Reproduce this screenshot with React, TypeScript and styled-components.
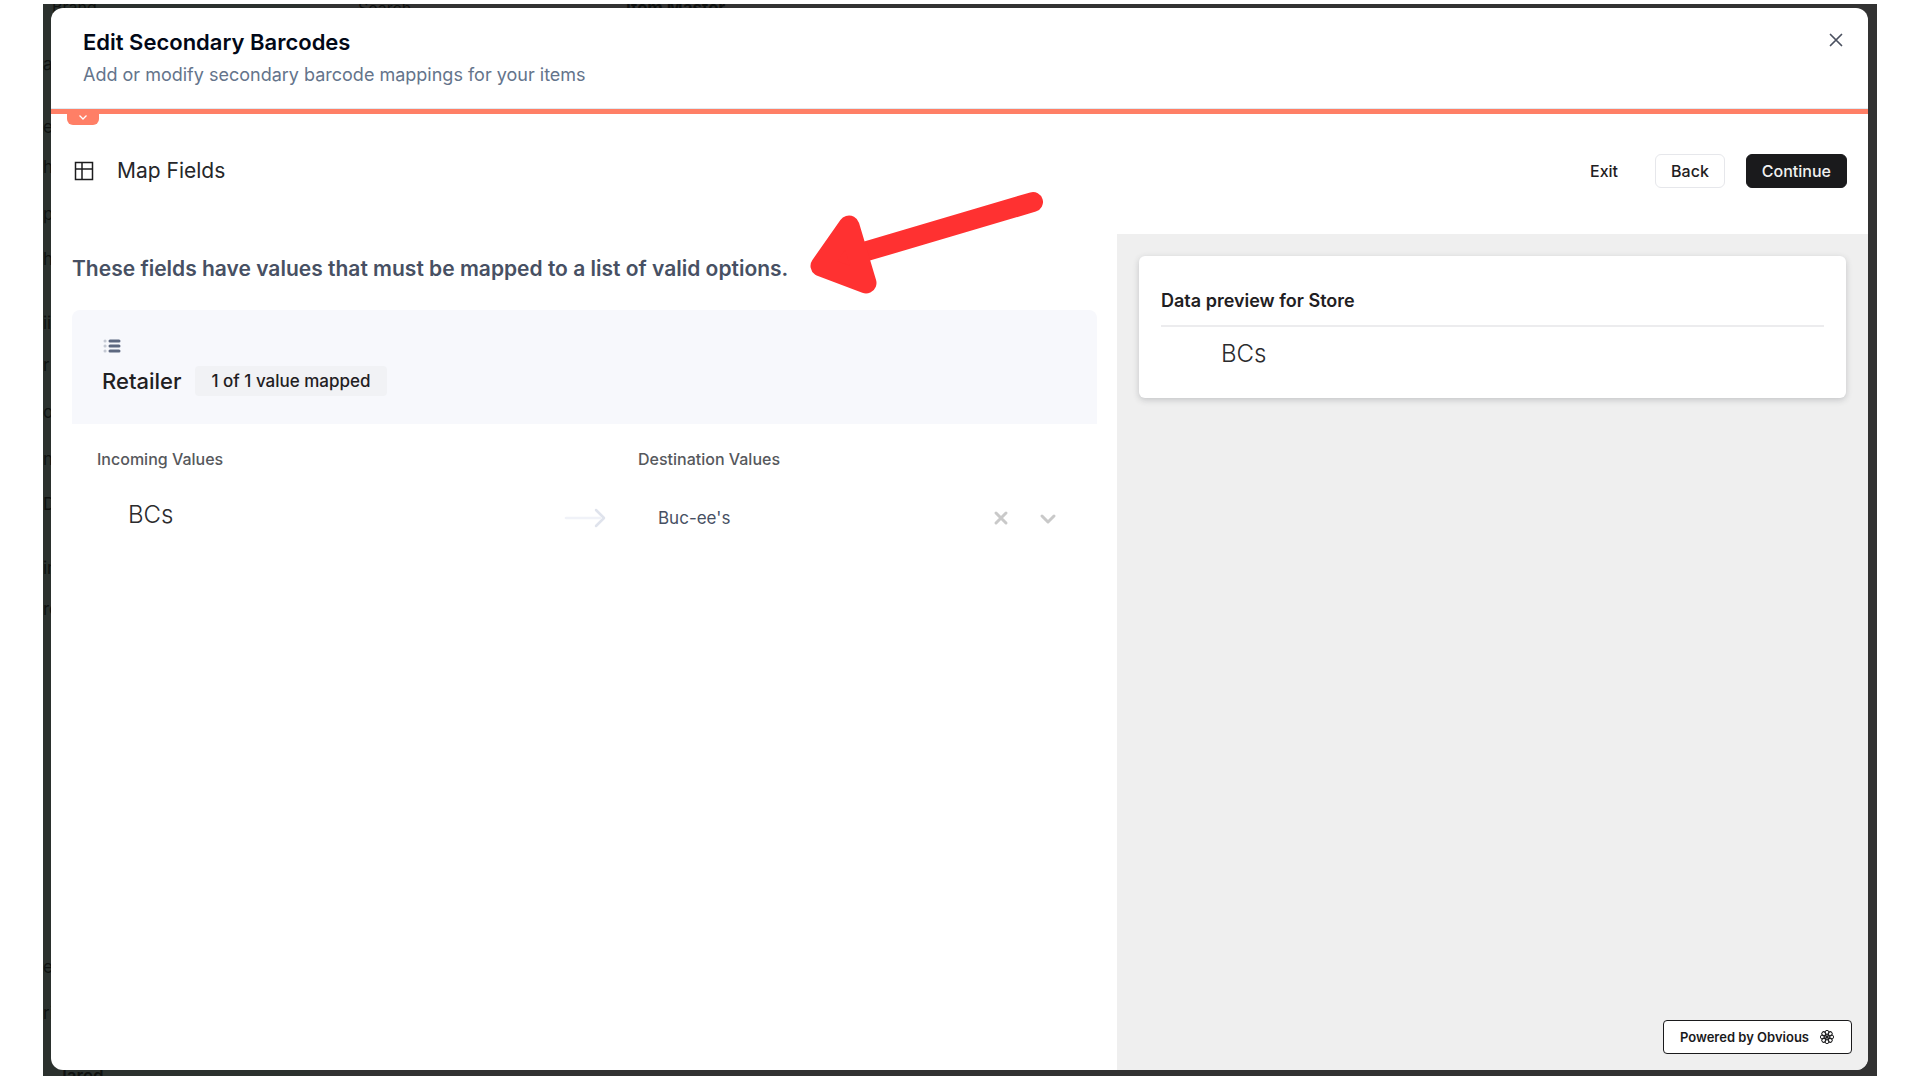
import React, { useState } from "react";
import styled, { createGlobalStyle } from "styled-components";

const GlobalStyle = createGlobalStyle`
  *, *::before, *::after { box-sizing: border-box; }
  body { margin: 0; background: #fff; }
  body, button, select { font-family: Inter, "Liberation Sans", sans-serif; }
  h1, h2, h3, p, ul { margin: 0; padding: 0; }
`;

const Page = styled.div`
  height: 100vh;
  padding: 4px 43px;
`;

const Screen = styled.div`
  position: relative;
  height: 100%;
  padding: 4px 9px 6px 8px;
  background: #323232;
  overflow: hidden;
`;

const Behind = styled.div`
  position: absolute;
  inset: 0;
  display: flex;
  color: #0f1110;
`;

const SideNav = styled.ul`
  width: 267px;
  flex: none;
  display: flex;
  flex-direction: column;
  background: #2b312e;
  list-style: none;
`;

const NavItem = styled.li<{ $height: number }>`
  flex: none;
  display: flex;
  align-items: flex-end;
  height: ${(p) => p.$height}px;
  font-size: 17px;
  line-height: 20px;
`;

const NavBrand = styled.li`
  flex: none;
  height: 12px;
  padding-left: 9px;
  font-size: 16px;
  line-height: 6px;
`;

const NavUser = styled.li`
  flex: none;
  margin-top: auto;
  height: 8px;
  padding-left: 14px;
  font-size: 17px;
  font-weight: 600;
  line-height: 16px;
`;

const TopBar = styled.div`
  display: flex;
  gap: 215px;
  padding-left: 48px;
  font-size: 16px;
  line-height: 8px;
`;

const Strong = styled.span`
  font-size: 17px;
  font-weight: 700;
`;

const Modal = styled.section`
  position: relative;
  display: flex;
  flex-direction: column;
  height: 100%;
  background: #fff;
  border-radius: 12px;
  overflow: hidden;
`;

const ModalHeader = styled.header`
  display: flex;
  justify-content: space-between;
  align-items: flex-start;
  height: 101px;
  padding: 18px 18px 0 32px;
  border-bottom: 1px solid #dfeaf2;
`;

const Title = styled.h1`
  font-size: 22px;
  font-weight: 600;
  line-height: 32px;
  color: #020817;
`;

const Subtitle = styled.p`
  font-size: 18px;
  line-height: 34px;
  color: #64748b;
`;

const IconButton = styled.button`
  display: flex;
  align-items: center;
  justify-content: center;
  flex: none;
  width: 28px;
  height: 28px;
  padding: 0;
  border: 0;
  background: none;
  color: #4b5160;
  cursor: pointer;
`;

const Accent = styled.div`
  flex: none;
  height: 16px;
  padding-left: 16px;
  border-top: 5px solid #ff7f66;
`;

const AccentTab = styled.button`
  display: flex;
  align-items: flex-start;
  justify-content: center;
  width: 32px;
  height: 11px;
  padding: 0;
  border: 0;
  border-radius: 0 0 6px 6px;
  background: #ff7f66;
  color: #fff;
`;

const Toolbar = styled.div`
  flex: none;
  display: flex;
  align-items: center;
  height: 109px;
  padding: 0 21px 18px 23px;
  color: #1c1c1e;
`;

const ToolbarTitle = styled.h2`
  margin-left: 23px;
  flex: 1;
  font-size: 21px;
  font-weight: 400;
  line-height: 28px;
  color: #26272a;
`;

const Actions = styled.div`
  display: flex;
  gap: 21px;
`;

const Button = styled.button<{ $kind: "plain" | "outline" | "solid" }>`
  height: 34px;
  padding: 0 15px;
  border: 1px solid
    ${(p) => ({ plain: "transparent", outline: "#e6e7eb", solid: "#1a1a1c" })[p.$kind]};
  border-radius: 6px;
  background: ${(p) => (p.$kind === "solid" ? "#1a1a1c" : "#fff")};
  color: ${(p) => (p.$kind === "solid" ? "#f1f1f1" : "#1f2022")};
  font-size: 16px;
  font-weight: 500;
  cursor: pointer;
`;

const Body = styled.div`
  flex: 1;
  min-height: 0;
  display: grid;
  grid-template-columns: 1066fr 751fr;
`;

const MappingPane = styled.main`
  position: relative;
  padding: 19px 20px 0 21px;
`;

const Lead = styled.h3`
  font-size: 21px;
  font-weight: 600;
  line-height: 32px;
  color: #475063;
`;

const Pointer = styled.svg`
  position: absolute;
  left: 754px;
  top: -46px;
  width: 244px;
  height: 112px;
  pointer-events: none;
`;

const FieldCard = styled.section`
  height: 114px;
  margin-top: 25px;
  padding: 26px 30px 0;
  border-radius: 8px 8px 0 0;
  background: #f7f8fc;
`;

const FieldLine = styled.div`
  display: flex;
  align-items: center;
  gap: 14px;
  margin-top: 6px;
`;

const FieldName = styled.h3`
  font-size: 22px;
  font-weight: 500;
  line-height: 28px;
  color: #1f2022;
`;

const Badge = styled.span`
  padding: 0 16px;
  border-radius: 4px;
  background: #f1f2f5;
  font-size: 17px;
  font-weight: 500;
  line-height: 30px;
  color: #1f2022;
`;

const MappingTable = styled.table`
  width: 100%;
  margin-top: 23px;
  table-layout: fixed;
  border-collapse: collapse;
`;

const HeadCell = styled.th<{ $width?: string; $indent?: number }>`
  width: ${(p) => p.$width ?? "auto"};
  padding: 0 0 0 ${(p) => p.$indent ?? 0}px;
  text-align: left;
  font-size: 16px;
  font-weight: 500;
  line-height: 24px;
  color: #56585c;
`;

const Cell = styled.td<{ $indent?: number }>`
  height: 76px;
  padding: 28px 0 0 ${(p) => p.$indent ?? 0}px;
  vertical-align: top;
`;

const Value = styled.span`
  font-size: 24px;
  font-weight: 300;
  line-height: 32px;
  color: #2b2b2d;
`;

const SelectRow = styled.div`
  display: flex;
  align-items: center;
  gap: 23px;
  height: 38px;
  padding-right: 39px;
  color: #c9c9c9;
`;

const Select = styled.select`
  appearance: none;
  flex: 1;
  min-width: 0;
  padding: 0 20px;
  border: 0;
  background: none;
  color: #475063;
  font-size: 17px;
  line-height: 28px;
`;

const ArrowIcon = styled.svg`
  display: block;
  width: 42px;
  height: 38px;
`;

const PreviewPane = styled.aside`
  display: flex;
  flex-direction: column;
  align-items: flex-end;
  justify-content: space-between;
  padding: 22px 22px 16px;
  background: #efefef;
`;

const PreviewCard = styled.section`
  width: 100%;
  height: 142px;
  padding: 29px 22px 0;
  border-radius: 6px;
  background: #fff;
  box-shadow: 0 2px 6px rgba(60, 64, 72, 0.24);
`;

const PreviewTitle = styled.h3`
  padding-bottom: 8px;
  border-bottom: 2px solid #ececee;
  font-size: 18px;
  font-weight: 600;
  line-height: 32px;
  color: #1f2022;
`;

const PreviewValue = styled.p`
  padding: 11px 60px;
  font-size: 24px;
  font-weight: 300;
  line-height: 32px;
  color: #2b2b2d;
`;

const Powered = styled.a`
  display: flex;
  align-items: center;
  gap: 10px;
  height: 34px;
  margin-right: -6px;
  padding: 0 16px;
  border: 1px solid #1a1a1c;
  border-radius: 4px;
  background: #fff;
  color: #1a1a1c;
  font-size: 13px;
  font-weight: 600;
  text-decoration: none;
`;

const navRows: Array<[string, number]> = [
  ["a", 58], ["e", 63], ["h", 40], ["p", 47], ["h", 45], ["ii", 64], ["r", 42], ["o", 47],
  ["n", 47], ["D", 45], ["in", 64], ["re", 41], ["e", 358], ["ri", 46],
];

const TableIcon = () => (
  <svg width="20" height="20" viewBox="0 0 20 20" fill="none" stroke="currentColor" strokeWidth="1.5" aria-hidden="true">
    <path d="M1.5 1.5h17v17h-17zM1.5 8h17M8 1.5v17" />
  </svg>
);

const ListIcon = () => (
  <svg width="20" height="20" viewBox="0 0 20 20" fill="none" strokeLinecap="round" strokeWidth="3" aria-hidden="true">
    <path d="M8 5h9M8 10h9M8 15h9" stroke="#5d6880" />
    <path d="M3 5h.1M3 10h.1M3 15h.1" stroke="#c4c9d3" />
  </svg>
);

const CloseIcon = () => (
  <svg width="14" height="14" viewBox="0 0 14 14" stroke="currentColor" strokeWidth="1.75" strokeLinecap="round" aria-hidden="true">
    <path d="M1.5 1.5l11 11M12.5 1.5l-11 11" />
  </svg>
);

const ClearIcon = () => (
  <svg width="16" height="16" viewBox="0 0 16 16" stroke="#c9c9c9" strokeWidth="3" strokeLinecap="round" aria-hidden="true">
    <path d="M3 3l10 10M13 3L3 13" />
  </svg>
);

const ChevronIcon = () => (
  <svg width="20" height="20" viewBox="0 0 20 20" fill="none" stroke="currentColor" strokeWidth="3" strokeLinecap="round" strokeLinejoin="round" aria-hidden="true">
    <path d="M4 8l6 6 6-6" />
  </svg>
);

const FlowerIcon = () => (
  <svg width="16" height="16" viewBox="-8 -8 16 16" fill="none" stroke="currentColor" aria-hidden="true">
    {[0, 45, 90, 135, 180, 225, 270, 315].map((angle) => (
      <g key={angle} transform={`rotate(${angle})`}>
        <circle cy="-4.6" r="2" strokeWidth="1" />
        <path d="M0 0v-3" strokeWidth="1" />
      </g>
    ))}
  </svg>
);

export default function App() {
  const [destination, setDestination] = useState("Buc-ee's");

  return (
    <>
      <GlobalStyle />
      <Page>
        <Screen>
          <Behind aria-hidden="true">
            <SideNav>
              <NavBrand>Brand</NavBrand>
              {navRows.map(([label, height], i) => (
                <NavItem key={i} $height={height}>{label}</NavItem>
              ))}
              <NavUser>Jared</NavUser>
            </SideNav>
            <TopBar>
              <span>Search</span>
              <Strong>Item Master</Strong>
            </TopBar>
          </Behind>

          <Modal role="dialog" aria-labelledby="modal-title">
            <ModalHeader>
              <div>
                <Title id="modal-title">Edit Secondary Barcodes</Title>
                <Subtitle>Add or modify secondary barcode mappings for your items</Subtitle>
              </div>
              <IconButton aria-label="Close"><CloseIcon /></IconButton>
            </ModalHeader>
            <Accent>
              <AccentTab aria-label="Expand steps">
                <svg width="10" height="7" viewBox="0 0 10 7" fill="none" stroke="currentColor" strokeWidth="1.25" aria-hidden="true">
                  <path d="M1.5 1.5L5 5l3.5-3.5" />
                </svg>
              </AccentTab>
            </Accent>
            <Toolbar>
              <TableIcon />
              <ToolbarTitle>Map Fields</ToolbarTitle>
              <Actions>
                <Button $kind="plain">Exit</Button>
                <Button $kind="outline">Back</Button>
                <Button $kind="solid">Continue</Button>
              </Actions>
            </Toolbar>
            <Body>
              <MappingPane>
                <Lead>These fields have values that must be mapped to a list of valid options.</Lead>
                <FieldCard>
                  <ListIcon />
                  <FieldLine>
                    <FieldName>Retailer</FieldName>
                    <Badge>1 of 1 value mapped</Badge>
                  </FieldLine>
                </FieldCard>
                <MappingTable>
                  <thead>
                    <tr>
                      <HeadCell $width="48%" $indent={25}>Incoming Values</HeadCell>
                      <HeadCell $width="74px" aria-label="Maps to" />
                      <HeadCell id="destination-head">Destination Values</HeadCell>
                    </tr>
                  </thead>
                  <tbody>
                    <tr>
                      <Cell $indent={56}><Value>BCs</Value></Cell>
                      <Cell>
                        <ArrowIcon viewBox="0 0 42 38" fill="none" strokeLinecap="round" strokeLinejoin="round" aria-hidden="true">
                          <path d="M2 19h34" stroke="#f0f2f8" strokeWidth="2.5" />
                          <path d="M32 11l8 8-8 8" stroke="#dfe3ec" strokeWidth="2.5" />
                        </ArrowIcon>
                      </Cell>
                      <Cell>
                        <SelectRow>
                          <Select
                            aria-labelledby="destination-head"
                            value={destination}
                            onChange={(e) => setDestination(e.target.value)}
                          >
                            <option value="" />
                            <option value="Buc-ee's">Buc-ee's</option>
                          </Select>
                          <IconButton aria-label="Clear value" onClick={() => setDestination("")}>
                            <ClearIcon />
                          </IconButton>
                          <ChevronIcon />
                        </SelectRow>
                      </Cell>
                    </tr>
                  </tbody>
                </MappingTable>
                <Pointer viewBox="805 188 244 112" aria-hidden="true">
                  <path d="M867 251L1033 202" stroke="#ff3131" strokeWidth="20" strokeLinecap="round" />
                  <path d="M849 226L821 266L866 283Z" fill="#ff3131" stroke="#ff3131" strokeWidth="21" strokeLinejoin="round" />
                </Pointer>
              </MappingPane>
              <PreviewPane>
                <PreviewCard>
                  <PreviewTitle>Data preview for Store</PreviewTitle>
                  <PreviewValue>BCs</PreviewValue>
                </PreviewCard>
                <Powered href="#">
                  Powered by Obvious
                  <FlowerIcon />
                </Powered>
              </PreviewPane>
            </Body>
          </Modal>
        </Screen>
      </Page>
    </>
  );
}
